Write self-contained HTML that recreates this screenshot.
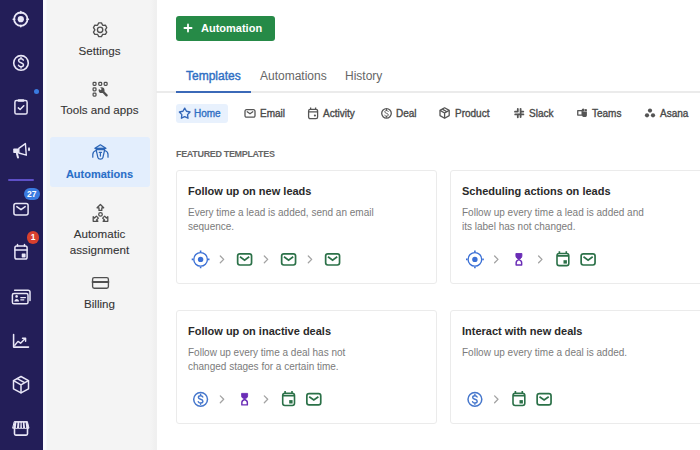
<!DOCTYPE html>
<html><head><meta charset="utf-8">
<style>
*{margin:0;padding:0;box-sizing:border-box}
html,body{width:700px;height:450px;overflow:hidden;background:#fff;font-family:"Liberation Sans",sans-serif;}
.a{position:absolute}
.t{position:absolute;white-space:nowrap;line-height:1}
#nav{left:0;top:0;width:43px;height:450px;background:#231e58}
#nav svg{position:absolute}
#panel{left:43px;top:0;width:114px;height:450px;background:linear-gradient(to right,#fcfcfe 0,#fcfcfe 3px,#f4f4f4 4px,#f4f4f4 108px,#f0f0f0 112px,#f0f0f0 114px)}
.pt{color:#343434;font-size:11.6px;text-align:center;width:113px;left:43px;-webkit-text-stroke:0.1px currentColor}
#sel{left:50px;top:137px;width:100px;height:50px;background:#e3eefd;border-radius:3px}
#btn{left:176px;top:16px;width:99px;height:25px;background:#268a47;border-radius:3px}
.card{position:absolute;border:1px solid #ebebeb;border-radius:3px;background:#fff}
.ct{font-weight:bold;font-size:11px;color:#2a2a2a}
.cd{font-size:10px;color:#7b7b7b}
.chip{font-size:10px;color:#4a4a4a;-webkit-text-stroke:0.35px currentColor}
.tab{font-size:12px;color:#666}
</style></head><body>
<div id="nav" class="a"></div>
<svg class="a" style="left:0;top:0" width="43" height="450" viewBox="0 0 43 450" fill="none" stroke="#e9e7f7" stroke-width="1.6" stroke-linecap="round" stroke-linejoin="round">
<!-- lead target -->
<circle cx="20.8" cy="19.2" r="6.7" stroke-width="1.8"/>
<circle cx="20.8" cy="19.2" r="3.1" fill="#e9e7f7" stroke="none"/>
<path d="M20.8 11.6v1.6M20.8 25.2v1.6M13.2 19.2h1.6M26.8 19.2h1.6"/>
<!-- dollar -->
<circle cx="21" cy="62.9" r="7.3"/>
<path d="M23.3 60.1c-.4-.8-1.2-1.3-2.3-1.3-1.4 0-2.4.8-2.4 1.9 0 2.5 4.9 1.5 4.9 4.1 0 1.2-1.1 2-2.5 2-1.2 0-2.1-.6-2.5-1.5M21 57.6v1.2M21 66.8v1.3" stroke-width="1.5"/>
<!-- clipboard -->
<rect x="14.9" y="100.6" width="12.2" height="13.5" rx="1.6" stroke-width="1.5"/>
<rect x="17.6" y="99.2" width="6.8" height="2.6" rx="1" fill="#e9e7f7" stroke="none"/>
<path d="M18.3 107.9l1.8 1.6 3.7-3.7" stroke-width="1.5"/>
<!-- megaphone -->
<rect x="13.2" y="148.4" width="5.6" height="4.6" rx="0.8" fill="#e9e7f7" stroke="none"/>
<path d="M18.8 148.4L25.4 143.6L26.3 155.2L18.8 153Z" stroke-width="1.4"/>
<path d="M16.9 153.6l1.1 4" stroke-width="2"/>
<ellipse cx="29" cy="149.2" rx="1" ry="2" fill="#e9e7f7" stroke="none"/>
<!-- mail -->
<rect x="13.9" y="203.5" width="14.2" height="11.4" rx="2" stroke-width="1.5"/>
<path d="M16.8 206.6l4.2 3.1 4.2-3.1" stroke-width="1.5"/>
<!-- calendar -->
<rect x="14.9" y="246" width="12.2" height="13.1" rx="1.8" stroke-width="1.5"/>
<path d="M15 249.9h12M17.5 244.5v1.6M24.5 244.5v1.6" stroke-width="1.5"/>
<rect x="21.7" y="253.5" width="3.9" height="3.9" rx=".6" fill="#e9e7f7" stroke="none"/>
<!-- contacts -->
<path d="M14.6 290.2h13.4c1.2 0 2 .8 2 2v8.3" stroke-width="1.5"/>
<rect x="12.4" y="293.4" width="15.6" height="10.4" rx="1.6" stroke-width="1.5"/>
<circle cx="16.6" cy="296.4" r="1.3" fill="#e9e7f7" stroke="none"/>
<path d="M14.3 301.5c.2-1.6 1.1-2.5 2.4-2.5s2.2.9 2.4 2.5z" fill="#e9e7f7" stroke="none"/>
<path d="M20.8 297.6h4.6M20.8 299.8h3" stroke-width="1.3"/>
<!-- chart -->
<path d="M13.6 334.4v12.7h14.9" stroke-width="1.55"/>
<path d="M14.8 345.2l3.2-3.8 2.6 1.8 4.6-4.6M22.5 338.2h3.1v3.1" stroke-width="1.45"/>
<!-- box -->
<path d="M21 376.5l7.5 4.1v8.2l-7.5 4.1-7.5-4.1v-8.2z" stroke-width="1.5"/>
<path d="M13.6 380.7l7.4 4.1 7.4-4.1M21 384.8v7.9M17.2 378.6l7.4 4.1" stroke-width="1.5"/>
<!-- store -->
<path d="M14.6 421.6h12.8l1.6 6.6H13z" fill="#e9e7f7" stroke="#e9e7f7" stroke-width="1"/>
<path d="M16.9 423.2l-.5 4.2M19.9 423.2l-.2 4.2M22.3 423.2l.2 4.2M25.1 423.2l.5 4.2" stroke="#231e58" stroke-width="1.2"/>
<path d="M14.5 428.6v5.2q0 1.3 1.3 1.3h10.4q1.3 0 1.3-1.3v-5.2" stroke-width="1.6"/>
</svg>
<div class="a" style="left:8px;top:179px;width:26px;height:2px;background:#5e4fc6;border-radius:1px"></div>
<div class="a" style="left:34.2px;top:89px;width:5px;height:5px;background:#3a7be0;border-radius:50%"></div>
<div class="a" style="left:23.5px;top:187.5px;width:16.5px;height:12px;background:#3a7be0;border-radius:6px;color:#fff;font-size:8.5px;font-weight:bold;line-height:12px;text-align:center">27</div>
<div class="a" style="left:26.9px;top:231px;width:12.6px;height:12.6px;background:#d9402e;border-radius:50%;color:#fff;font-size:8.5px;font-weight:bold;line-height:12.6px;text-align:center">1</div>

<div id="panel" class="a"></div>
<div id="sel" class="a"></div>
<svg class="a" style="left:43px;top:0" width="113" height="450" viewBox="43 0 113 450" fill="none" stroke="#505050" stroke-width="1.3" stroke-linecap="round" stroke-linejoin="round">
<!-- gear -->
<path d="M97.50 25.30 L98.76 22.93 L101.44 22.93 L102.70 25.30 L105.38 25.21 L106.72 27.52 L105.30 29.80 L106.72 32.08 L105.38 34.39 L102.70 34.30 L101.44 36.67 L98.76 36.67 L97.50 34.30 L94.82 34.39 L93.48 32.08 L94.90 29.80 L93.48 27.52 L94.82 25.21Z" stroke-width="1.35"/>
<circle cx="100.1" cy="29.8" r="2.7" stroke-width="1.35"/>
<!-- tools -->
<g stroke-width="1.25">
<rect x="93.1" y="82.4" width="2.9" height="2.9" rx=".8"/>
<rect x="98.8" y="82.4" width="2.9" height="2.9" rx=".8"/>
<rect x="104.2" y="82.4" width="2.9" height="2.9" rx=".8"/>
<rect x="93.1" y="87.9" width="2.9" height="2.9" rx=".8"/>
<rect x="93.1" y="93.2" width="2.9" height="2.9" rx=".8"/>
</g>
<circle cx="101.6" cy="90.2" r="2.9" fill="#505050" stroke="none"/>
<path d="M102.4 91l4.2 4.4" stroke-width="2.3"/>
<path d="M98.9 87.5l2.2 2.2" stroke="#f4f4f4" stroke-width="1.8" stroke-linecap="butt"/>
<!-- billing -->
<rect x="92.6" y="277.6" width="15.8" height="10.6" rx="1.6" stroke-width="1.35"/>
<path d="M92.6 282h15.8" stroke-width="2"/>
<!-- assignment -->
<path d="M100.4 204.5l-3.3 3.3h1.9v2.6h2.8v-2.6h1.9z" stroke-width="1.3"/>
<circle cx="100.5" cy="214.4" r="1.8" stroke-width="1.3"/>
<path transform="translate(93.2 221.3) rotate(-135)" d="M0 0l-3.3 3.3h1.9v2.6h2.8v-2.6h1.9z" stroke-width="1.3"/>
<path transform="translate(107.8 221.3) rotate(135)" d="M0 0l-3.3 3.3h1.9v2.6h2.8v-2.6h1.9z" stroke-width="1.3"/>
<!-- robot -->
<g stroke="#2c65b6" stroke-width="1.25">
<path d="M94.9 148.3L100.4 144.8L105.9 148.3Z" fill="#c4dbf8"/>
<path d="M96.1 149.6H104.7L102.9 157.6Q102.5 159 100.4 159Q98.3 159 97.9 157.6Z"/>
<path d="M96 150.5C93.9 151.1 92.8 152.7 92.8 154.6V157.2M104.8 150.5C106.9 151.1 108 152.7 108 154.6V157.2"/>
<path d="M99.3 152.4H101.5M100.4 153.4V156"/>
</g>
</svg>

<div class="t pt m" style="top:45px">Settings</div>
<div class="t pt m" style="top:104px">Tools and apps</div>
<div class="t pt m" style="top:169px;color:#2a6fc8;font-weight:bold;font-size:11px">Automations</div>
<div class="t pt m" style="top:228px">Automatic</div>
<div class="t pt m" style="top:244px">assignment</div>
<div class="t pt m" style="top:298px">Billing</div>

<div id="btn" class="a"></div>
<svg class="a" style="left:182px;top:22px" width="12" height="12" viewBox="0 0 12 12"><path d="M6 2.4V9.6M2.4 6H9.6" stroke="#fff" stroke-width="1.8" stroke-linecap="round"/></svg>
<div class="t m" style="left:201px;top:23.2px;color:#fff;font-weight:bold;font-size:11px">Automation</div>

<div class="t tab m" style="left:186px;top:70px;color:#2f6fc4;-webkit-text-stroke:0.4px currentColor">Templates</div>
<div class="t tab m" style="left:260px;top:70px">Automations</div>
<div class="t tab m" style="left:345px;top:70px">History</div>
<div class="a" style="left:156px;top:91px;width:544px;height:2px;background:#ebebeb"></div>
<div class="a" style="left:176px;top:91px;width:75px;height:2px;background:#3b69b8"></div>

<div class="a" style="left:176px;top:104px;width:52px;height:18.5px;background:#e8f1fd;border-radius:3px"></div>
<div class="t chip m" style="left:194px;top:109px;color:#2f6fc4">Home</div>
<div class="t chip m" style="left:260px;top:109px">Email</div>
<div class="t chip m" style="left:323px;top:109px">Activity</div>
<div class="t chip m" style="left:396px;top:109px">Deal</div>
<div class="t chip m" style="left:455px;top:109px">Product</div>
<div class="t chip m" style="left:529px;top:109px">Slack</div>
<div class="t chip m" style="left:592px;top:109px">Teams</div>
<div class="t chip m" style="left:660px;top:109px">Asana</div>

<div class="t m" style="left:176px;top:150px;font-size:9px;font-weight:bold;color:#666;letter-spacing:-0.34px">FEATURED TEMPLATES</div>

<div class="card" style="left:176px;top:170px;width:261px;height:114px"></div>
<div class="card" style="left:450px;top:170px;width:270px;height:114px"></div>
<div class="card" style="left:176px;top:310px;width:261px;height:114px"></div>
<div class="card" style="left:450px;top:310px;width:270px;height:114px"></div>

<div class="t ct m" style="left:188px;top:186px">Follow up on new leads</div>
<div class="t cd m" style="left:188px;top:208px">Every time a lead is added, send an email</div>
<div class="t cd m" style="left:188px;top:222px">sequence.</div>
<div class="t ct m" style="left:462px;top:186px">Scheduling actions on leads</div>
<div class="t cd m" style="left:462px;top:208px">Follow up every time a lead is added and</div>
<div class="t cd m" style="left:462px;top:222px">its label has not changed.</div>
<div class="t ct m" style="left:188px;top:326px">Follow up on inactive deals</div>
<div class="t cd m" style="left:188px;top:348px">Follow up every time a deal has not</div>
<div class="t cd m" style="left:188px;top:362px">changed stages for a certain time.</div>
<div class="t ct m" style="left:462px;top:326px">Interact with new deals</div>
<div class="t cd m" style="left:462px;top:348px">Follow up every time a deal is added.</div>
<!--CONTENT_ICONS-->
<svg class="a" style="left:0;top:0" width="700" height="450" viewBox="0 0 700 450" fill="none">
<g transform="translate(200.6 259.4)"><circle r="6.8" stroke="#3a6fd5" stroke-width="1.35"/><circle r="2.7" fill="#3a6fd5"/><path d="M0 -7.4V-8.9M0 7.4V8.9M-7.4 0H-8.9M7.4 0H8.9" stroke="#3a6fd5" stroke-width="1.6"/></g>
<path d="M220.30 256.00L223.70 259.40L220.30 262.80" stroke="#a3a3a3" stroke-width="1.3" stroke-linecap="round" stroke-linejoin="round"/>
<g transform="translate(244.6 259.4)"><rect x="-6.95" y="-5.6" width="13.9" height="11.2" rx="2.2" stroke="#2b7148" stroke-width="1.7"/><path d="M-4.6 -2.6L0 0.7L4.6 -2.6" stroke="#2b7148" stroke-width="1.7"/></g>
<path d="M264.30 256.00L267.70 259.40L264.30 262.80" stroke="#a3a3a3" stroke-width="1.3" stroke-linecap="round" stroke-linejoin="round"/>
<g transform="translate(288.6 259.4)"><rect x="-6.95" y="-5.6" width="13.9" height="11.2" rx="2.2" stroke="#2b7148" stroke-width="1.7"/><path d="M-4.6 -2.6L0 0.7L4.6 -2.6" stroke="#2b7148" stroke-width="1.7"/></g>
<path d="M308.30 256.00L311.70 259.40L308.30 262.80" stroke="#a3a3a3" stroke-width="1.3" stroke-linecap="round" stroke-linejoin="round"/>
<g transform="translate(332.6 259.4)"><rect x="-6.95" y="-5.6" width="13.9" height="11.2" rx="2.2" stroke="#2b7148" stroke-width="1.7"/><path d="M-4.6 -2.6L0 0.7L4.6 -2.6" stroke="#2b7148" stroke-width="1.7"/></g>
<g transform="translate(474.9 259.4)"><circle r="6.8" stroke="#3a6fd5" stroke-width="1.35"/><circle r="2.7" fill="#3a6fd5"/><path d="M0 -7.4V-8.9M0 7.4V8.9M-7.4 0H-8.9M7.4 0H8.9" stroke="#3a6fd5" stroke-width="1.6"/></g>
<path d="M494.60 256.00L498.00 259.40L494.60 262.80" stroke="#a3a3a3" stroke-width="1.3" stroke-linecap="round" stroke-linejoin="round"/>
<g transform="translate(518.9 259.4)"><path d="M-3.0 -5.9H3.0V-3.5C3.0 -1.7 1.5 -.7 0 -.2C-1.5 -.7 -3.0 -1.7 -3.0 -3.5Z" fill="#6a2db6" stroke="#6a2db6" stroke-width="0.9" stroke-linejoin="round"/><path d="M-2.75 5.6H2.75V3.3C2.75 1.7 1.4 .7 0 .2C-1.4 .7 -2.75 1.7 -2.75 3.3Z" stroke="#6a2db6" stroke-width="1.45" stroke-linejoin="round"/></g>
<path d="M538.60 256.00L542.00 259.40L538.60 262.80" stroke="#a3a3a3" stroke-width="1.3" stroke-linecap="round" stroke-linejoin="round"/>
<g transform="translate(562.9 259.4)"><rect x="-5.9" y="-5.9" width="11.8" height="12.1" rx="2.2" stroke="#2b7148" stroke-width="1.6"/><path d="M-5.9 -3.5H5.9M-3.5 -8.2V-6.2M3.4 -8.2V-6.2" stroke="#2b7148" stroke-width="1.6"/><rect x="0.6" y="0.8" width="3.4" height="3.4" fill="#2b7148"/></g>
<g transform="translate(588.1 259.4)"><rect x="-6.95" y="-5.6" width="13.9" height="11.2" rx="2.2" stroke="#2b7148" stroke-width="1.7"/><path d="M-4.6 -2.6L0 0.7L4.6 -2.6" stroke="#2b7148" stroke-width="1.7"/></g>
<g transform="translate(200.6 399.3)"><circle r="6.9" stroke="#4677cc" stroke-width="1.5"/><g transform="scale(1.0)"><path d="M2.2 -2.3C1.9 -3.1 1.1 -3.6 0 -3.6C-1.3 -3.6 -2.2 -2.9 -2.2 -1.9C-2.2 .4 2.3 -.5 2.3 1.9C2.3 3 1.3 3.7 0 3.7C-1.1 3.7 -2 3.2 -2.3 2.4M0 -5V-3.7M0 3.8V5" stroke="#4677cc" stroke-width="1.4249999999999998" stroke-linecap="round"/></g></g>
<path d="M220.30 395.90L223.70 399.30L220.30 402.70" stroke="#a3a3a3" stroke-width="1.3" stroke-linecap="round" stroke-linejoin="round"/>
<g transform="translate(244.6 399.3)"><path d="M-3.0 -5.9H3.0V-3.5C3.0 -1.7 1.5 -.7 0 -.2C-1.5 -.7 -3.0 -1.7 -3.0 -3.5Z" fill="#6a2db6" stroke="#6a2db6" stroke-width="0.9" stroke-linejoin="round"/><path d="M-2.75 5.6H2.75V3.3C2.75 1.7 1.4 .7 0 .2C-1.4 .7 -2.75 1.7 -2.75 3.3Z" stroke="#6a2db6" stroke-width="1.45" stroke-linejoin="round"/></g>
<path d="M264.30 395.90L267.70 399.30L264.30 402.70" stroke="#a3a3a3" stroke-width="1.3" stroke-linecap="round" stroke-linejoin="round"/>
<g transform="translate(288.6 399.3)"><rect x="-5.9" y="-5.9" width="11.8" height="12.1" rx="2.2" stroke="#2b7148" stroke-width="1.6"/><path d="M-5.9 -3.5H5.9M-3.5 -8.2V-6.2M3.4 -8.2V-6.2" stroke="#2b7148" stroke-width="1.6"/><rect x="0.6" y="0.8" width="3.4" height="3.4" fill="#2b7148"/></g>
<g transform="translate(313.8 399.3)"><rect x="-6.95" y="-5.6" width="13.9" height="11.2" rx="2.2" stroke="#2b7148" stroke-width="1.7"/><path d="M-4.6 -2.6L0 0.7L4.6 -2.6" stroke="#2b7148" stroke-width="1.7"/></g>
<g transform="translate(474.9 399.3)"><circle r="6.9" stroke="#4677cc" stroke-width="1.5"/><g transform="scale(1.0)"><path d="M2.2 -2.3C1.9 -3.1 1.1 -3.6 0 -3.6C-1.3 -3.6 -2.2 -2.9 -2.2 -1.9C-2.2 .4 2.3 -.5 2.3 1.9C2.3 3 1.3 3.7 0 3.7C-1.1 3.7 -2 3.2 -2.3 2.4M0 -5V-3.7M0 3.8V5" stroke="#4677cc" stroke-width="1.4249999999999998" stroke-linecap="round"/></g></g>
<path d="M494.60 395.90L498.00 399.30L494.60 402.70" stroke="#a3a3a3" stroke-width="1.3" stroke-linecap="round" stroke-linejoin="round"/>
<g transform="translate(518.9 399.3)"><rect x="-5.9" y="-5.9" width="11.8" height="12.1" rx="2.2" stroke="#2b7148" stroke-width="1.6"/><path d="M-5.9 -3.5H5.9M-3.5 -8.2V-6.2M3.4 -8.2V-6.2" stroke="#2b7148" stroke-width="1.6"/><rect x="0.6" y="0.8" width="3.4" height="3.4" fill="#2b7148"/></g>
<g transform="translate(544.1 399.3)"><rect x="-6.95" y="-5.6" width="13.9" height="11.2" rx="2.2" stroke="#2b7148" stroke-width="1.7"/><path d="M-4.6 -2.6L0 0.7L4.6 -2.6" stroke="#2b7148" stroke-width="1.7"/></g>
<path d="M184.70 108.10 L186.46 111.27 L190.03 111.97 L187.55 114.63 L187.99 118.23 L184.70 116.70 L181.41 118.23 L181.85 114.63 L179.37 111.97 L182.94 111.27Z" stroke="#3366b8" stroke-width="1.35" stroke-linejoin="round"/>
<g transform="translate(250 113.4)"><rect x="-5" y="-3.75" width="10" height="7.5" rx="1.5" stroke="#555" stroke-width="1.3"/><path d="M-2.8 -1.6L0 .3L2.8 -1.6" stroke="#555" stroke-width="1.3" stroke-linecap="round"/></g>
<g transform="translate(313.1 113.2)"><rect x="-4.5" y="-3.9" width="9" height="9.4" rx="1.6" stroke="#555" stroke-width="1.3"/><path d="M-4.5 -1.3H4.5M-2.5 -5.6V-4M2.5 -5.6V-4" stroke="#555" stroke-width="1.3"/><circle cx="1.8" cy="2.3" r="1.1" fill="#555"/></g>
<g transform="translate(386.5 113.35)"><circle r="4.8" stroke="#555" stroke-width="1.3"/><g transform="scale(0.78)"><path d="M2.2 -2.3C1.9 -3.1 1.1 -3.6 0 -3.6C-1.3 -3.6 -2.2 -2.9 -2.2 -1.9C-2.2 .4 2.3 -.5 2.3 1.9C2.3 3 1.3 3.7 0 3.7C-1.1 3.7 -2 3.2 -2.3 2.4M0 -5V-3.7M0 3.8V5" stroke="#555" stroke-width="1.2349999999999999" stroke-linecap="round"/></g></g>
<g transform="translate(444.6 113)" stroke="#555" stroke-width="1.3" stroke-linejoin="round"><path d="M0 -5.2L4.6 -2.6V2.6L0 5.2L-4.6 2.6V-2.6Z"/><path d="M-4.6 -2.6L0 0L4.6 -2.6M0 0V5.2M-2.3 -3.9L2.3 -1.3"/></g>
<g transform="translate(519.2 113)" stroke="#555" stroke-width="1.8" stroke-linecap="round"><path d="M-1.4 -4V-1.5M1.4 -4.2V1M-4.2 -1.3H-1.6M4.2 1.4H-1M-1.4 1.6V4.3M1.4 1.5V4M4.1 -1.4H1.6M-4 1.4H-1.2" /></g>
<g transform="translate(582 112.8)" fill="#555"><rect x="-4.9" y="-2.7" width="5.6" height="5.6" rx=".6"/><circle cx="1.2" cy="-2.9" r="1.5"/><circle cx="3.9" cy="-2.6" r="1.1"/><path d="M0 -1.4H4.9V2.4C4.9 3.6 4 4.3 2.6 4.3C1.1 4.3 0 3.6 0 2.4Z"/><rect x="-3.6" y="-1.5" width="3.1" height="3.2" fill="#fff"/></g>
<g fill="#555"><circle cx="650" cy="110.6" r="2.1"/><circle cx="647" cy="115.3" r="2.1"/><circle cx="653" cy="115.3" r="2.1"/></g>
</svg>
<!--/CONTENT_ICONS-->
</body></html>
